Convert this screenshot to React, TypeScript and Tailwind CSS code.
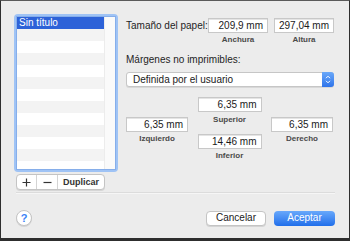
const font = { fontFamily: '"Liberation Sans", Arial, sans-serif' }

function Field({ value, w }: { value: string; w: string }) {
  return (
    <div
      className={`${w} h-[15px] bg-white border border-[#c8c8c8] shadow-[inset_0_1px_0_#e4e4e4] flex items-center justify-end pr-[4px] text-[10px] text-[#1a1a1a] leading-none`}
    >
      {value}
    </div>
  )
}

function Caption({ children }: { children: string }) {
  return <div className="text-[8px] font-bold text-[#4a4a4a] leading-none text-center">{children}</div>
}

export default function App() {
  const rows = Array.from({ length: 12 })
  return (
    <div
      style={font}
      className="w-[350px] h-[241px] bg-[#ececec] border-x border-t border-b-[3px] border-x-[#2e2e2e] border-t-[#5a5a5a] border-b-[#2e2e2e] flex flex-col"
    >
      <div className="flex pl-[13px] pt-[13px] pr-[15px]">
        {/* Left: list */}
        <div className="flex flex-col w-[104px]">
          <div className="h-[158px] p-[2px] rounded-[4px] bg-[#9fc3f5]">
            <div className="h-full bg-white flex border border-[#86aeea]">
              <div className="flex-1 flex flex-col overflow-hidden">
                <div className="h-[12px] shrink-0 bg-[#2d62d8] text-white text-[10px] leading-[12px] pl-[2px]">Sin título</div>
                {rows.map((_, i) => (
                  <div key={i} className={`h-[12px] shrink-0 ${i % 2 === 0 ? 'bg-[#f3f3f3]' : 'bg-white'}`} />
                ))}
              </div>
              <div className="w-[11px] bg-[#fafafa] border-l border-[#ececec]" />
            </div>
          </div>
          <div className="mt-[2px] ml-[2px] w-[89px] h-[16px] flex bg-white border border-[#c4c4c4] rounded-[4px] shadow-[0_1px_0_#d6d6d6] text-[#2a2a2a]">
            <div className="w-[20px] flex items-center justify-center border-r border-[#d4d4d4]">
              <svg width="9" height="9" viewBox="0 0 9 9"><path d="M4.5 0.5v8M0.5 4.5h8" stroke="#333" strokeWidth="1.2" /></svg>
            </div>
            <div className="w-[21px] flex items-center justify-center border-r border-[#d4d4d4]">
              <svg width="9" height="9" viewBox="0 0 9 9"><path d="M0.5 4.5h8" stroke="#333" strokeWidth="1.2" /></svg>
            </div>
            <div className="flex-1 flex items-center justify-center text-[9px] font-bold text-[#333] leading-none">Duplicar</div>
          </div>
        </div>

        {/* Right: paper settings */}
        <div className="ml-[8px] flex-1 flex flex-col pt-[4px]">
          <div className="flex items-center">
            <div className="flex-1 text-[10px] text-[#1e1e1e] leading-none">Tamaño del papel:</div>
            <Field value="209,9 mm" w="w-[60px]" />
            <Field value="297,04 mm" w="w-[60px] ml-[6px]" />
          </div>
          <div className="flex justify-end mt-[3px]">
            <div className="w-[60px]"><Caption>Anchura</Caption></div>
            <div className="w-[60px] ml-[6px]"><Caption>Altura</Caption></div>
          </div>
          <div className="mt-[11px] text-[10px] text-[#1e1e1e] leading-none">Márgenes no imprimibles:</div>
          <div className="mt-[7px] h-[15px] flex bg-white border border-[#c6c6c6] rounded-[3px] shadow-[0_1px_0_#d8d8d8]">
            <div className="flex-1 flex items-center pl-[6px] text-[10px] text-[#1a1a1a] leading-none">Definida por el usuario</div>
            <div className="w-[12px] -my-px -mr-px rounded-r-[3px] bg-gradient-to-b from-[#6aa8f9] to-[#2f74ea] flex items-center justify-center">
              <svg width="6" height="9" viewBox="0 0 6 9">
                <path d="M1 3.2L3 1.2L5 3.2M1 5.8L3 7.8L5 5.8" fill="none" stroke="white" strokeWidth="1" />
              </svg>
            </div>
          </div>
          <div className="mt-[10px] flex justify-between">
            <div className="pt-[20px] flex flex-col">
              <Field value="6,35 mm" w="w-[62px]" />
              <div className="mt-[3px]"><Caption>Izquierdo</Caption></div>
            </div>
            <div className="flex flex-col">
              <Field value="6,35 mm" w="w-[64px]" />
              <div className="mt-[4px]"><Caption>Superior</Caption></div>
              <div className="mt-[10px]"><Field value="14,46 mm" w="w-[64px]" /></div>
              <div className="mt-[3px]"><Caption>Inferior</Caption></div>
            </div>
            <div className="pt-[20px] flex flex-col mr-px">
              <Field value="6,35 mm" w="w-[62px]" />
              <div className="mt-[3px]"><Caption>Derecho</Caption></div>
            </div>
          </div>
        </div>
      </div>

      <div className="mt-[2px] ml-[15px] mr-[14px] h-[2px] bg-[#dcdcdc] border-b border-[#f6f6f6]" />

      <div className="flex items-center pl-[15px] pr-[14px] mt-[16px]">
        <div className="w-[16px] h-[16px] rounded-full bg-white border border-[#c4c4c4] shadow-[0_1px_0_#d4d4d4] flex items-center justify-center text-[11px] font-bold text-[#3b82f6] leading-none">?</div>
        <div className="flex-1" />
        <div className="w-[60px] h-[15px] bg-white border border-[#c4c4c4] rounded-[4px] shadow-[0_1px_0_#d4d4d4] flex items-center justify-center text-[10px] text-[#1a1a1a] leading-none">Cancelar</div>
        <div className="ml-[8px] w-[61px] h-[15px] rounded-[4px] bg-gradient-to-b from-[#68a8fb] to-[#1f6eea] flex items-center justify-center text-[10px] text-white leading-none">Aceptar</div>
      </div>
    </div>
  )
}
